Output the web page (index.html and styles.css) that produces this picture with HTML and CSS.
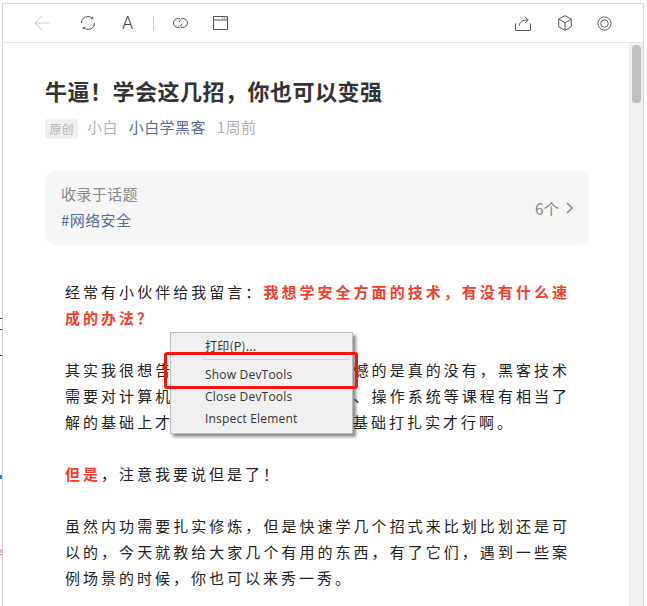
FILE: index.html
```html
<!DOCTYPE html>
<html lang="zh-CN">
<head>
<meta charset="utf-8">
<title>牛逼！学会这几招，你也可以变强</title>
<link rel="stylesheet" href="styles.css">
</head>
<body>
<div class="window">
  <header class="toolbar">
    <div class="tools">
      <svg class="icon back" viewBox="0 0 18 18"><path d="M17 9H2M9 2 2 9l7 7"/></svg>
      <svg class="icon refresh" viewBox="0 0 16 16"><path d="M1.500 8A6.500 6.500 0 0 1 12.600 3.400M14.500 8A6.500 6.500 0 0 1 3.400 12.600M12.800 1.600v2h-2M3.200 14.400v-2h2"/></svg>
      <span class="font-a">A</span>
      <span class="divider"></span>
      <svg class="icon link" viewBox="0 0 17 14"><path d="M8 2.800C7.300 2.600 6.700 2.500 6 2.500a4.500 4.500 0 1 0 0 9c2.500 0 3-2 4-4"/><path d="M9 11.200c.7.2 1.300.3 2 .3a4.500 4.500 0 1 0 0-9c-2.500 0-3 2-4 4"/></svg>
      <svg class="icon window-icon" viewBox="0 0 15 14"><path d="M.5.5h14v13H.5zM.5 4h14"/><path class="dots" d="M9 2.200h1M11 2.200h1M13 2.200h.8"/></svg>
    </div>
    <div class="tools-right">
      <svg class="icon share" viewBox="0 0 16 15"><path d="M.5 7.500v7h15v-7M4 10C4.500 6 7.500 4 12.500 4M10 .8 13.200 4 10 7"/></svg>
      <svg class="icon box" viewBox="0 0 14 16"><path d="M7 .7 13.300 4.200v7.600L7 15.300.7 11.800V4.200zM.7 4.200 7 7.700l6.300-3.500M7 7.700v7.600"/></svg>
      <svg class="icon target" viewBox="0 0 16 16"><circle cx="8" cy="8" r="7"/><circle cx="8" cy="8" r="4"/></svg>
    </div>
  </header>
  <div class="body">
    <main class="content">
      <h1 class="title">牛逼！学会这几招，你也可以变强</h1>
      <div class="meta">
        <span class="tag">原创</span>
        <span class="author">小白</span>
        <span class="account">小白学黑客</span>
        <span class="time">1周前</span>
      </div>
      <section class="topic">
        <div class="topic-text">
          <div class="topic-label">收录于话题</div>
          <div class="topic-name">#网络安全</div>
        </div>
        <div class="topic-count">6个<svg class="chevron" viewBox="0 0 7 12"><path d="M1 1l5 5-5 5"/></svg></div>
      </section>
      <article class="article">
        <p>经常有小伙伴给我留言：<strong>我想学安全方面的技术，有没有什么速成的办法？</strong></p>
        <p>其实我很想告诉大家速成的办法，遗憾的是真的没有，黑客技术需要对计算机原理、网络、数据结构、操作系统等课程有相当了解的基础上才能深入学习，所以要把基础打扎实才行啊。</p>
        <p><strong>但是</strong>，注意我要说但是了！</p>
        <p>虽然内功需要扎实修炼，但是快速学几个招式来比划比划还是可以的，今天就教给大家几个有用的东西，有了它们，遇到一些案例场景的时候，你也可以来秀一秀。</p>
      </article>
    </main>
    <div class="scrollbar"><div class="thumb"></div></div>
  </div>
</div>
<div class="menu">
  <div class="menu-item first">打印(P)...</div>
  <div class="menu-sep"></div>
  <div class="menu-item">Show DevTools</div>
  <div class="menu-item">Close DevTools</div>
  <div class="menu-item">Inspect Element</div>
</div>
<div class="highlight"></div>
<div class="bg-mark mark-dark mark-a"></div>
<div class="bg-mark mark-dark mark-b"></div>
<div class="bg-mark mark-dark mark-c"></div>
<div class="bg-mark mark-blue mark-d"></div>
<div class="bg-mark mark-orange mark-e"></div>
<div class="bg-mark mark-pink mark-f"></div>
</body>
</html>
```
FILE: styles.css
```css
* { box-sizing: border-box; }
html, body { margin: 0; height: 100%; overflow: hidden; background: #fff; }
body { padding: 3px 3px 0 2px; font-family: "Noto Sans CJK SC", sans-serif; }
.window { height: 603px; display: flex; flex-direction: column; border-top: 1px solid #dcdcdc; border-left: 1px solid #d6d6d6; border-right: 1px solid #d6d6d6; background: #fff; }
.toolbar { height: 39px; flex: none; display: flex; justify-content: space-between; align-items: center; border-bottom: 1px solid #e4e4e4; padding: 0 31px 0 30px; }
.tools, .tools-right { display: flex; align-items: center; }
.icon { display: block; fill: none; stroke: #555; stroke-width: 1; }
.back { width: 18px; height: 18px; stroke: #c8c8c8; margin-right: 29px; }
.refresh { width: 16px; height: 16px; margin-right: 26px; }
.font-a { font-family: "Roboto", sans-serif; font-weight: 300; font-size: 18px; line-height: 20px; width: 12px; color: #444; margin-right: 19px; }
.divider { width: 1px; height: 15px; background: #ccc; margin-right: 18px; }
.link { width: 17px; height: 14px; margin-right: 24px; }
.window-icon { width: 15px; height: 14px; }
.dots { stroke: #555; }
.share { width: 16px; height: 15px; margin-right: 27px; }
.box { width: 14px; height: 16px; margin-right: 25px; }
.target { width: 15px; height: 15px; }
.body { flex: 1; min-height: 0; display: flex; }
.content { flex: 1; min-width: 0; padding: 29px 40px 0 42px; overflow: hidden; }
.title { margin: 0; font-size: 22px; line-height: 36px; font-weight: 700; letter-spacing: .5px; color: #333; }
.meta { margin-top: 10px; display: flex; align-items: flex-start; height: 20px; line-height: 18px; font-size: 15px; letter-spacing: .4px; color: #b2b2b2; }
.tag { width: 33px; height: 20px; border-radius: 2px; background: #f0f0f0; font-size: 12px; line-height: 20px; letter-spacing: 0; text-align: center; color: #b2b2b2; margin-right: 9px; position: relative; top: 1px; }
.author { margin-right: 11px; }
.account { color: #576b95; margin-right: 11px; }
.topic { margin-top: 33px; height: 74px; border-radius: 10px; background: #f6f6f6; display: flex; justify-content: space-between; align-items: center; padding: 0 16px; font-size: 15px; letter-spacing: .4px; }
.topic-text { position: relative; top: -1px; }
.topic-label { color: #888; line-height: 26px; }
.topic-name { color: #576b95; line-height: 26px; }
.topic-count { display: flex; align-items: center; gap: 7px; color: #888; font-size: 15.500px; letter-spacing: 0; }
.chevron { width: 7px; height: 12px; fill: none; stroke: #888; stroke-width: 1.500; }
.article { padding: 0 19px 0 20px; margin-top: 34px; font-size: 15px; line-height: 26px; letter-spacing: 3px; color: #222; }
.article p { margin: 0 0 26px; text-align: justify; }
.article strong { color: #fa3c2c; font-weight: 700; }
.scrollbar { width: 14px; flex: none; background: #f0f0f0; padding: 2px 2px 0; border-left: 1px solid #eee; }
.thumb { height: 58px; border-radius: 4px; background: #c0c0c4; }
.menu { position: absolute; left: 170px; top: 332px; width: 183px; height: 102px; background: #f0f0f0; border: 1px solid #bdbdbd; box-shadow: 3px 3px 3px rgba(0,0,0,.45); padding-top: 2px; font-family: "Open Sans", sans-serif; font-size: 12px; color: #333; }
.menu-item { height: 22px; line-height: 20px; padding-left: 34px; letter-spacing: .2px; }
.menu-item.first { height: 20px; line-height: 22px; font-family: "Noto Sans CJK SC", sans-serif; }
.menu-sep { height: 1px; background: #d4d4d4; margin: 4px 2px 5px 31px; }
.highlight { position: absolute; left: 164px; top: 352px; width: 194px; height: 37px; border: 3px solid #f5150f; border-radius: 3px; }
.bg-mark { position: absolute; left: 0; width: 2px; height: 1px; }
.mark-dark { background: #333; }
.mark-blue { background: #2a7fd0; height: 4px; }
.mark-orange { background: #f08a4a; }
.mark-pink { background: #eeb0d8; height: 4px; }
.mark-a { top: 318px; }
.mark-b { top: 329px; }
.mark-c { top: 355px; }
.mark-d { top: 475px; }
.mark-e { top: 554px; }
.mark-f { top: 549px; }
```
